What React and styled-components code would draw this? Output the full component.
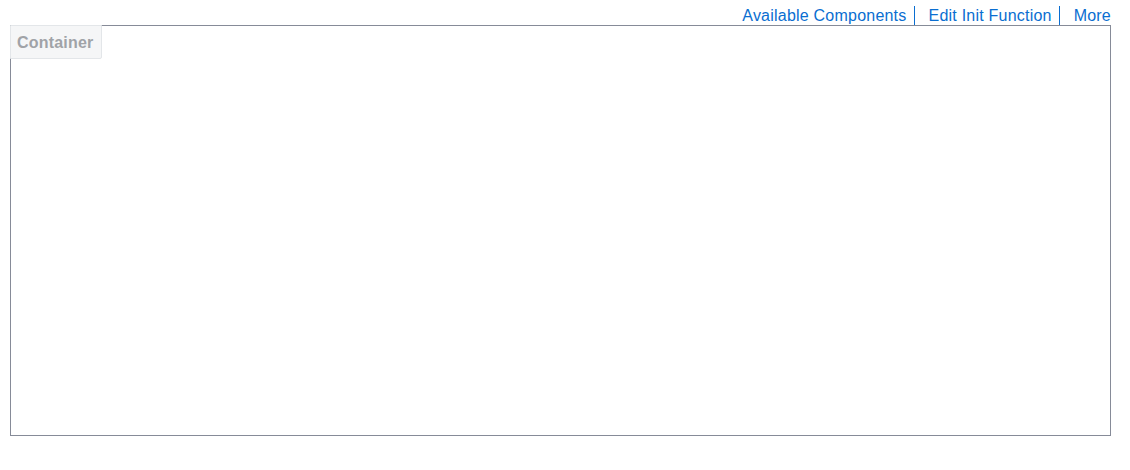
import React from "react";
import styled, { createGlobalStyle } from "styled-components";

const Global = createGlobalStyle`
  html, body { margin: 0; padding: 0; background: #ffffff; }
  body { font-family: "Liberation Sans", Arial, sans-serif; }
`;

const Page = styled.div`
  padding: 0 19px 0 10px;
  display: flex;
  flex-direction: column;
`;

const Toolbar = styled.nav`
  display: flex;
  justify-content: flex-end;
  align-items: flex-start;
  height: 19px;
  padding-top: 6px;
`;

const LinkItem = styled.a`
  font-size: 16px;
  line-height: 19px;
  letter-spacing: 0.22px;
  color: #0a6ed1;
  text-decoration: none;
  cursor: pointer;
  white-space: nowrap;
  & + & {
    margin-left: 7px;
    padding-left: 14px;
    border-left: 1px solid #0a6ed1;
  }
`;

const Container = styled.section`
  position: relative;
  height: 409px;
  border: 1px solid #868b98;
  background: #ffffff;
`;

const Label = styled.div`
  position: absolute;
  top: -1px;
  left: -1px;
  padding: 8px 8px 6px 6px;
  font-size: 16px;
  line-height: 18px;
  letter-spacing: 0.2px;
  font-weight: bold;
  color: #a0a3a7;
  background: #f5f6f7;
  border: 1px solid #e3e6e9;
  border-radius: 0 0 2px 0;
`;

export default function App() {
  return (
    <>
      <Global />
      <Page>
        <Toolbar>
          <LinkItem>Available Components</LinkItem>
          <LinkItem>Edit Init Function</LinkItem>
          <LinkItem>More</LinkItem>
        </Toolbar>
        <Container>
          <Label>Container</Label>
        </Container>
      </Page>
    </>
  );
}
